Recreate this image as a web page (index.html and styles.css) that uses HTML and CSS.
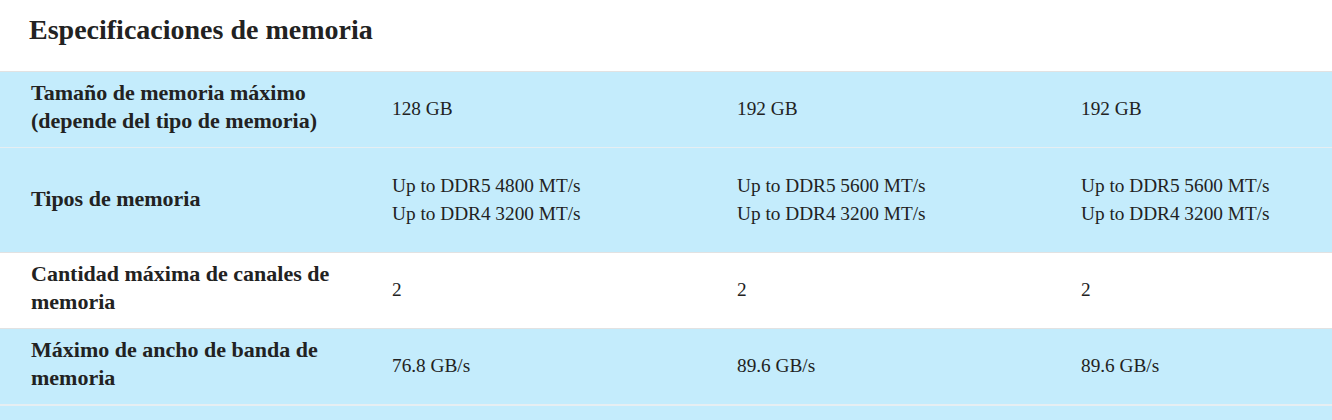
FILE: index.html
```html
<!DOCTYPE html>
<html lang="es">
<head>
<meta charset="utf-8">
<link rel="stylesheet" href="styles.css">
</head>
<body>
<section class="specs">
  <h2 class="specs-title">Especificaciones de memoria</h2>
  <div class="spec-row blue">
    <div class="label">Tamaño de memoria máximo (depende del tipo de memoria)</div>
    <div class="val">128 GB</div>
    <div class="val">192 GB</div>
    <div class="val">192 GB</div>
  </div>
  <div class="spec-row blue tall">
    <div class="label">Tipos de memoria</div>
    <div class="val">Up to DDR5 4800 MT/s<br>Up to DDR4 3200 MT/s</div>
    <div class="val">Up to DDR5 5600 MT/s<br>Up to DDR4 3200 MT/s</div>
    <div class="val">Up to DDR5 5600 MT/s<br>Up to DDR4 3200 MT/s</div>
  </div>
  <div class="spec-row">
    <div class="label">Cantidad máxima de canales de memoria</div>
    <div class="val">2</div>
    <div class="val">2</div>
    <div class="val">2</div>
  </div>
  <div class="spec-row blue">
    <div class="label">Máximo de ancho de banda de memoria</div>
    <div class="val">76.8 GB/s</div>
    <div class="val">89.6 GB/s</div>
    <div class="val">89.6 GB/s</div>
  </div>
  <div class="spec-row blue spacer"></div>
</section>
</body>
</html>
```
FILE: styles.css
```css
html, body {
  margin: 0;
  padding: 0;
  background: #fff;
}
body {
  font-family: "Liberation Serif", "Times New Roman", serif;
  color: #222;
}
.specs-title {
  margin: 0;
  padding: 14px 29px 0;
  height: 71px;
  box-sizing: border-box;
  font-size: 28px;
  font-weight: bold;
  line-height: 32px;
  color: #222;
}
.spec-row {
  display: grid;
  grid-template-columns: 392px 345px 344px 1fr;
  align-items: center;
  border-top: 1px solid #e2e2e2;
  padding: 7px 0 9px;
  min-height: 59px;
}
.spec-row.blue {
  background: #c4ecfc;
}
.spec-row.blue + .spec-row.blue {
  border-top-color: #e6eef2;
}
.spec-row.tall {
  padding: 24px 0;
  min-height: 56px;
}
.spec-row.spacer {
  border-top: 2px solid #e2e2e2;
}
.label {
  padding-left: 31px;
  padding-right: 24px;
  padding-bottom: 3px;
  font-weight: bold;
  font-size: 22px;
  line-height: 28px;
}
.val {
  font-size: 19.3px;
  line-height: 28px;
}
```
